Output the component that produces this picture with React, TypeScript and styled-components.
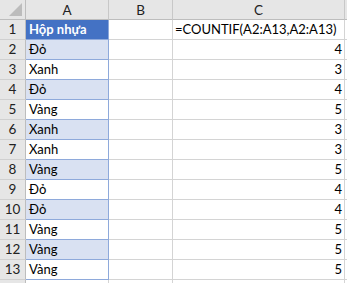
import { Fragment } from "react";
import styled, { createGlobalStyle } from "styled-components";

const GlobalStyle = createGlobalStyle`
  html, body {
    margin: 0;
    padding: 0;
    background: #ffffff;
    overflow: hidden;
  }
  * {
    box-sizing: border-box;
  }
`;

const Sheet = styled.div`
  display: grid;
  grid-template-columns: 26px 83px 64px 172px 1fr;
  grid-auto-rows: 20px;
  width: 347px;
  height: 283px;
  overflow: hidden;
  font-family: Lato, "Liberation Sans", sans-serif;
  font-size: 13px;
  color: #000;
  background: #fff;
`;

const Corner = styled.div`
  position: relative;
  background: #e6e6e6;
  border-right: 1px solid #bdbdbd;
  border-bottom: 1px solid #bdbdbd;
  svg {
    position: absolute;
    right: 3px;
    bottom: 3px;
  }
`;

const ColHead = styled.div`
  display: flex;
  align-items: center;
  justify-content: center;
  background: #e6e6e6;
  border-right: 1px solid #c8c8c8;
  border-bottom: 1px solid #bdbdbd;
  color: #222;
  font-size: 13.5px;
  padding-top: 1px;
`;

const RowHead = styled.div`
  display: flex;
  align-items: flex-end;
  justify-content: center;
  padding-bottom: 2px;
  background: #e6e6e6;
  border-right: 1px solid #bdbdbd;
  border-bottom: 1px solid #d0d0d0;
  color: #222;
  font-size: 13.5px;
`;

const Cell = styled.div<{ $align?: "left" | "right" }>`
  display: flex;
  align-items: flex-end;
  justify-content: ${(p) => (p.$align === "right" ? "flex-end" : "flex-start")};
  padding: 0 2px 2px 3px;
  border-right: 1px solid #d4d4d4;
  border-bottom: 1px solid #d4d4d4;
  white-space: nowrap;
  overflow: visible;
`;

const TableCell = styled(Cell)<{ $band?: boolean; $head?: boolean }>`
  background: ${(p) => (p.$head ? "#4472c4" : p.$band ? "#d9e1f2" : "#ffffff")};
  color: ${(p) => (p.$head ? "#ffffff" : "#000")};
  font-weight: ${(p) => (p.$head ? 700 : 400)};
  border-right: 1px solid #8ea9db;
  border-bottom: 1px solid #8ea9db;
`;

const FormulaCell = styled(Cell)`
  padding-left: 2px;
`;

const colors = ["Đỏ", "Xanh", "Đỏ", "Vàng", "Xanh", "Xanh", "Vàng", "Đỏ", "Đỏ", "Vàng", "Vàng", "Vàng"];
const counts = [4, 3, 4, 5, 3, 3, 5, 4, 4, 5, 5, 5];

export default function App() {
  return (
    <>
      <GlobalStyle />
      <Sheet>
        <Corner>
          <svg width="13" height="13" viewBox="0 0 13 13">
            <polygon points="13,0 13,13 0,13" fill="#bcbcbc" />
          </svg>
        </Corner>
        <ColHead>A</ColHead>
        <ColHead>B</ColHead>
        <ColHead>C</ColHead>
        <ColHead />

        <RowHead>1</RowHead>
        <TableCell $head>Hộp nhựa</TableCell>
        <Cell />
        <FormulaCell>=COUNTIF(A2:A13,A2:A13)</FormulaCell>
        <Cell />

        {colors.map((c, i) => (
          <Fragment key={i}>
            <RowHead>{i + 2}</RowHead>
            <TableCell $band={i % 2 === 0}>{c}</TableCell>
            <Cell />
            <Cell $align="right">{counts[i]}</Cell>
            <Cell />
          </Fragment>
        ))}

        <RowHead />
        <Cell />
        <Cell />
        <Cell />
        <Cell />
      </Sheet>
    </>
  );
}
